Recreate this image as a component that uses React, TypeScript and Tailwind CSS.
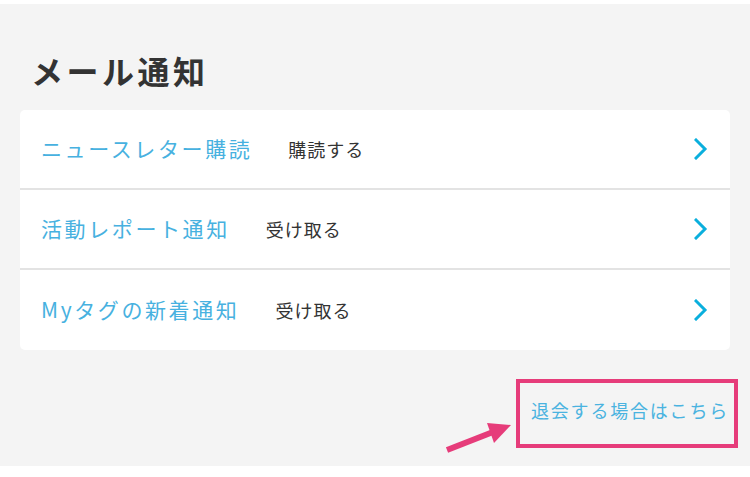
const rows = [
  { label: 'ニュースレター購読', value: '購読する' },
  { label: '活動レポート通知', value: '受け取る' },
  { label: 'Myタグの新着通知', value: '受け取る' },
];

const Chevron = () => (
  <svg width="14" height="22" viewBox="0 0 14 22" fill="none">
    <path d="M2 2l9 9-9 9" stroke="#0aafdd" strokeWidth="3" strokeLinecap="square" strokeLinejoin="miter" />
  </svg>
);

export default function App() {
  return (
    <div
      className="relative w-[750px] h-[477px] bg-white overflow-hidden"
      style={{ fontFamily: '"Noto Sans CJK JP", "Noto Sans", sans-serif' }}
    >
      <div className="mt-[4px] h-[462px] bg-[#f4f4f4] px-5">
        <h2 className="pt-[50px] pl-[11px] text-[32px] leading-none font-bold tracking-[3.5px] text-[#333]">
          メール通知
        </h2>

        <div className="mt-[24px] bg-white rounded-[5px] overflow-hidden">
          {rows.map((r, i) => (
            <div
              key={r.label}
              className={`flex items-center pl-[21px] pr-[22px] ${
                i < rows.length - 1 ? 'h-[80px] border-b-2 border-[#e3e3e3]' : 'h-[80px]'
              }`}
            >
              <span className="text-[21px] tracking-[2.6px] text-[#47b1e0]">{r.label}</span>
              <span className="ml-[36px] text-[18px] tracking-[1px] text-[#333]">{r.value}</span>
              <span className="ml-auto flex items-center">
                <Chevron />
              </span>
            </div>
          ))}
        </div>

        <div className="mt-[51px] flex justify-end pr-[1px]">
          <a className="text-[18px] leading-none tracking-[1.8px] text-[#4ab3e0]">退会する場合はこちら</a>
        </div>
      </div>

      {/* annotation */}
      <div className="absolute left-[516px] top-[379px] w-[222px] h-[69px] border-4 border-[#e63c7a]" />
      <svg className="absolute left-0 top-0 pointer-events-none" width="750" height="477">
        <line x1="447" y1="450" x2="493" y2="432" stroke="#e63c7a" strokeWidth="6" />
        <polygon points="511,425 487,423 494,443" fill="#e63c7a" />
      </svg>
    </div>
  );
}
